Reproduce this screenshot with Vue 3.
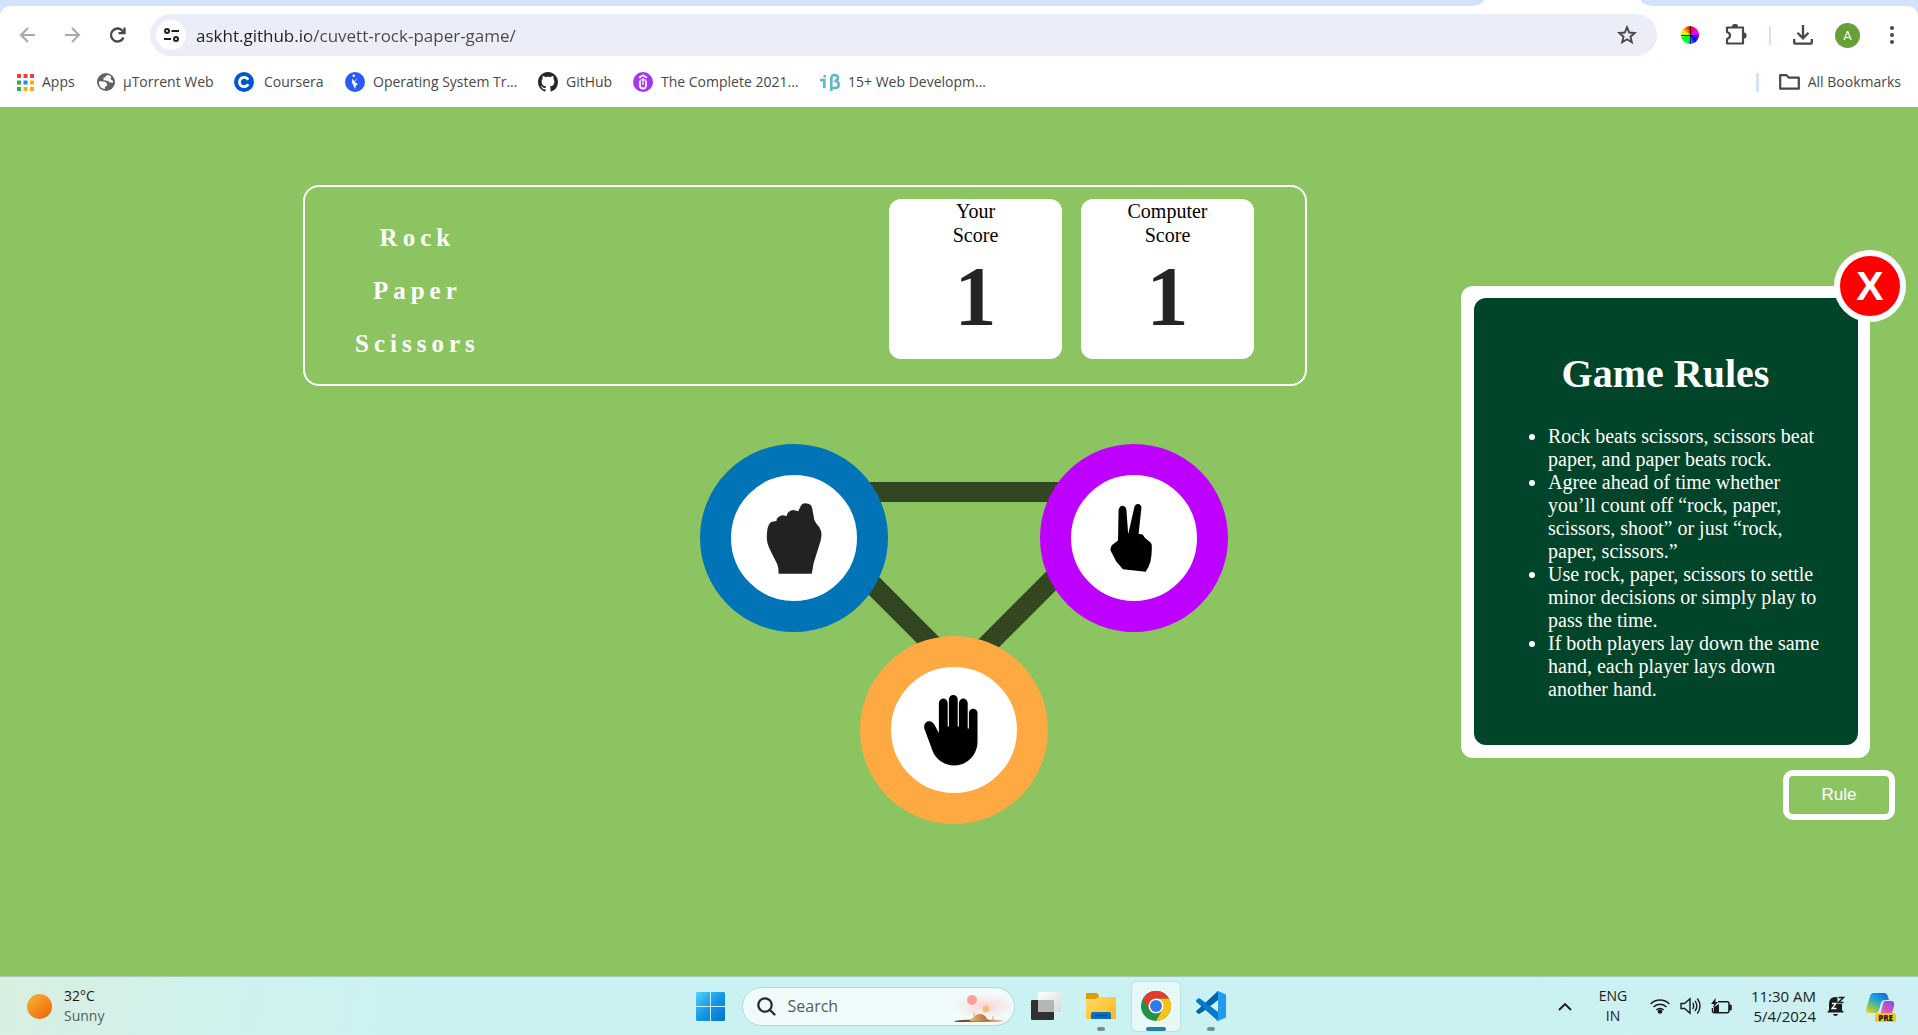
<script setup>
import { ref } from 'vue'

const address = ref('askht.github.io/cuvett-rock-paper-game/')
const query = ref('')
const yourScore = ref(1)
const computerScore = ref(1)
const showRules = ref(true)

const bookmarks = [
  { icon: 'apps', label: 'Apps', width: 80 },
  { icon: 'globe', label: 'µTorrent Web', width: 137 },
  { icon: 'coursera', label: 'Coursera', width: 111 },
  { icon: 'scaler', label: 'Operating System Tr...', width: 193 },
  { icon: 'github', label: 'GitHub', width: 95 },
  { icon: 'udemy', label: 'The Complete 2021...', width: 187 },
  { icon: 'ib', label: '15+ Web Developm...', width: 180 }
]

const rules = [
  'Rock beats scissors, scissors beat paper, and paper beats rock.',
  'Agree ahead of time whether you’ll count off “rock, paper, scissors, shoot” or just “rock, paper, scissors.”',
  'Use rock, paper, scissors to settle minor decisions or simply play to pass the time.',
  'If both players lay down the same hand, each player lays down another hand.'
]
</script>

<template>
  <div class="screen">
    <header class="browser">
      <div class="tabs">
        <span class="strip left"></span>
        <span class="active-tab"></span>
        <span class="strip right"></span>
      </div>
      <div class="chrome">
        <div class="toolbar">
          <nav class="history">
            <button class="icon-btn" aria-label="Back">
              <svg width="18" height="18" viewBox="0 0 18 18" fill="none" stroke="#a9a9a9" stroke-width="2"><path d="M16 9H3M9 2 2 9l7 7" /></svg>
            </button>
            <button class="icon-btn" aria-label="Forward">
              <svg width="18" height="18" viewBox="0 0 18 18" fill="none" stroke="#a9a9a9" stroke-width="2"><path d="M1 9h14M8 2l7 7-7 7" /></svg>
            </button>
            <button class="icon-btn" aria-label="Reload">
              <svg width="18" height="18" viewBox="0 0 18 18" fill="none" stroke="#474747" stroke-width="2.3"><path d="M14.500 11.500A6.500 6.500 0 1 1 13 4.300L15 6" /><path d="M15.500 1.500v5.700H9.500" /></svg>
            </button>
          </nav>
          <div class="omnibox">
            <button class="site-info" aria-label="Site information">
              <svg width="17" height="14" viewBox="0 0 17 14" fill="none" stroke="#1f1f1f" stroke-width="2"><circle cx="4" cy="3" r="2" /><path d="M8.500 3H16M1 11h7" /><circle cx="13" cy="11" r="2" /></svg>
            </button>
            <input v-model="address" class="url" type="text" aria-label="Address" spellcheck="false" />
            <button class="icon-btn" aria-label="Bookmark this page">
              <svg width="20" height="20" viewBox="0 0 20 20" fill="none" stroke="#474747" stroke-width="1.9"><path d="M10 2.300l2.200 5.200 5.600.5-4.300 3.700 1.300 5.500L10 14.300l-4.800 2.900 1.300-5.500L2.200 8l5.600-.5z" /></svg>
            </button>
          </div>
          <div class="actions">
            <button class="icon-btn wheel" aria-label="Color picker"><span class="wheel-disc"></span></button>
            <button class="icon-btn" aria-label="Extensions">
              <svg width="22" height="22" viewBox="0 0 22 22" fill="none" stroke="#474747" stroke-width="2.200" stroke-linejoin="round"><path d="M2 3.500h16v16H2v-4.500c4-1.500 4-5.500 0-7z" /><path d="M8 2.500a2 1.500 0 0 1 4 0zM19 9.500a1.500 2 0 0 1 0 4z" fill="#474747" /></svg>
            </button>
            <span class="divider"></span>
            <button class="icon-btn" aria-label="Downloads">
              <svg width="20" height="20" viewBox="0 0 20 20" fill="none" stroke="#474747" stroke-width="2.300"><path d="M10 0v13M4.500 7.800 10 13.300l5.500-5.500M1.200 14v3.200q0 1.500 1.500 1.500h14.600q1.500 0 1.500-1.500V14" /></svg>
            </button>
            <button class="avatar" aria-label="Profile">A</button>
            <button class="icon-btn" aria-label="Menu">
              <svg width="6" height="18" viewBox="0 0 6 18" fill="#474747"><circle cx="3" cy="2" r="2" /><circle cx="3" cy="9" r="2" /><circle cx="3" cy="16" r="2" /></svg>
            </button>
          </div>
        </div>

        <nav class="bookmarks">
          <a v-for="b in bookmarks" :key="b.label" class="bookmark" :class="b.icon" href="#" :style="{ width: b.width + 'px' }">
            <svg v-if="b.icon === 'apps'" width="17" height="17" viewBox="0 0 17 17">
              <path fill="#ea4335" d="M0 0h4v4H0zM6.500 0h4v4h-4zM13 0h4v4h-4z" />
              <path fill="#34a853" d="M0 6.500h4v4H0zM0 13h4v4H0z" />
              <path fill="#1a8cff" d="M6.500 6.500h4v4h-4z" />
              <path fill="#fbad04" d="M13 6.500h4v4h-4zM6.500 13h4v4h-4zM13 13h4v4h-4z" />
            </svg>
            <svg v-else-if="b.icon === 'globe'" width="18" height="18" viewBox="0 0 18 18">
              <circle cx="9" cy="9" r="9" fill="#5f6368" />
              <path fill="#fff" d="M11.500 2q-3 .2-3 2.200l-2 .5v2l2.500 1h2.200l.8 1.500 3.800.5q.2-1 .2-1.700L13.500 6l.8-2.300zM2 8.300l5.500.2 2.500 2v2.200l-2 1-.2 2.300Q3 15.500 2 10.500z" />
            </svg>
            <svg v-else-if="b.icon === 'coursera'" width="20" height="20" viewBox="0 0 20 20">
              <circle cx="10" cy="10" r="10" fill="#0056d2" />
              <path d="M14.200 12.300a4.700 4.700 0 1 1 0-4.600" fill="none" stroke="#fff" stroke-width="2.800" />
            </svg>
            <svg v-else-if="b.icon === 'scaler'" width="20" height="20" viewBox="0 0 20 20">
              <circle cx="10" cy="10" r="10" fill="#2a5bf5" />
              <circle cx="8.800" cy="3.800" r="1.300" fill="#fff" />
              <path d="M13.300 5.500 9 9.300 7.500 6.500 6.800 10 8 12.500l2 4.500 1-3.500 2-1.500L9.500 10z" fill="#fff" />
            </svg>
            <svg v-else-if="b.icon === 'github'" width="20" height="20" viewBox="0 0 16 16">
              <path fill="#24292f" d="M8 0C3.580 0 0 3.580 0 8c0 3.540 2.290 6.530 5.470 7.590.4.070.55-.17.55-.38 0-.19-.01-.82-.01-1.490-2.010.37-2.530-.49-2.690-.94-.09-.23-.48-.94-.82-1.130-.28-.15-.68-.52-.01-.53.63-.01 1.080.58 1.230.82.72 1.210 1.870.87 2.330.66.07-.52.28-.87.51-1.070-1.780-.2-3.640-.89-3.640-3.950 0-.87.31-1.590.82-2.150-.08-.2-.36-1.020.08-2.120 0 0 .67-.21 2.200.82A7.600 7.600 0 0 1 8 3.860c.68 0 1.360.09 2 .27 1.530-1.040 2.200-.82 2.200-.82.44 1.100.16 1.920.08 2.120.51.56.82 1.270.82 2.150 0 3.070-1.870 3.750-3.650 3.950.29.25.54.73.54 1.480 0 1.070-.01 1.930-.01 2.200 0 .21.15.46.55.38A8 8 0 0 0 16 8c0-4.420-3.580-8-8-8z" />
            </svg>
            <svg v-else-if="b.icon === 'udemy'" width="20" height="20" viewBox="0 0 20 20">
              <circle cx="10" cy="10" r="10" fill="#a435f0" />
              <path d="M6 5.800 10 3.300l4 2.500M7 8.500v5q0 3 3 3t3-3v-5" fill="none" stroke="#fff" stroke-width="1.800" />
              <path d="M10 6v7M7 8h6" stroke="#fff" stroke-width="1.200" />
            </svg>
            <svg v-else width="20" height="18" viewBox="0 0 20 18" fill="none" stroke="#5fb8cc" stroke-width="2.600">
              <path d="M0 7h4.300v8M3.500 3.200h2.500" /><path d="M11.300 18V5.500q0-3.500 3.300-3.500t3.300 3q0 3-3.500 3 4.300 0 4.300 3.500t-3.500 3.500-3.900-1.500" />
            </svg>
            <span>{{ b.label }}</span>
          </a>
          <span class="spacer"></span>
          <span class="divider wide"></span>
          <a class="bookmark all" href="#">
            <svg width="21" height="16" viewBox="0 0 21 16" fill="none" stroke="#474747" stroke-width="2.200" stroke-linejoin="round"><path d="M1.200 1.200h6.300L10 3.700h9.800v11H1.200z" /></svg>
            <span>All Bookmarks</span>
          </a>
        </nav>
      </div>
    </header>

    <main class="page">
      <section class="game">
        <div class="scoreboard">
          <div class="names">
            <span>Rock</span>
            <span>Paper</span>
            <span>Scissors</span>
          </div>
          <div class="cards">
            <div class="card">
              <span>Your</span>
              <span>Score</span>
              <strong>{{ yourScore }}</strong>
            </div>
            <div class="card">
              <span>Computer</span>
              <span>Score</span>
              <strong>{{ computerScore }}</strong>
            </div>
          </div>
        </div>

        <div class="board">
          <svg class="links" viewBox="0 0 528 380" fill="none" stroke="#324621" stroke-width="20">
            <path d="M94 48H434M94 62 254 222M434 54 254 234" />
          </svg>
          <button class="hand rock" aria-label="Rock">
            <svg viewBox="0 0 126 126"><path fill="#242220" d="M35.800 61.700Q36 55 36.900 52.300 38 48.500 40 47L45.400 46Q45.500 43.500 47.200 42.300 49.500 40.300 51.900 40.300L55.800 41Q55.800 38.500 57.600 37 60 35 62.600 35L67.200 36.300 69.400 31.700Q71 28.300 74 28.300 78 28.300 79.700 30 81.500 32 81.500 35L83.300 45Q84.500 48 88.300 52.300 90.800 56 90.400 61 90 66 88.300 70L82.600 88.300 80.800 98.700H47.600Q47.600 92 45.800 88.300L40 76.700Q37.500 72 36.500 68.300 35.800 65 35.800 61.700Z" /></svg>
          </button>
          <button class="hand scissors" aria-label="Scissors">
            <svg viewBox="0 0 126 126"><path fill="#000" d="M47 65.500 47.600 35Q48.500 30.700 51.500 30.700 55 31 55.400 35L57.200 59.300 63.300 32.300Q64.500 29 66.900 29 70.400 29.300 70.400 33L67.600 59Q71 58.800 71.900 59.700L73.600 62.500 79.700 67.700Q81 69 80.800 72 81 80 79.400 86.700 77.500 93 74.700 96.700L51.900 94.300 45.400 86.700 39.700 75.700Q39 72.500 41.100 70Z" /></svg>
          </button>
          <button class="hand paper" aria-label="Paper">
            <svg viewBox="0 0 126 126"><path fill="#000" d="M47.900 66V36a4.400 4.400 0 0 1 8.800 0V59.500h1.200V32.300a4.400 4.400 0 0 1 8.800 0V59.500h1.200V36a4.400 4.400 0 0 1 8.800 0V61.500h1.200V46a4.300 4.300 0 0 1 8.600 0V74.700C86.500 88 76 98.500 63.300 98.500 53 98.500 45 92 41.900 84.700L33.300 61.500C32 53 41 52 43.600 58Z" /></svg>
          </button>
        </div>
      </section>

      <aside class="side">
        <section v-if="showRules" class="rules">
          <div class="rules-body">
            <h1>Game Rules</h1>
            <ul>
              <li v-for="rule in rules" :key="rule">{{ rule }}</li>
            </ul>
          </div>
          <button class="close" aria-label="Close rules" @click="showRules = false">X</button>
        </section>
        <button class="rule-btn" @click="showRules = true">Rule</button>
      </aside>
    </main>

    <footer class="taskbar">
      <div class="weather">
        <span class="sun"></span>
        <div class="lines">
          <span>32°C</span>
          <span class="muted">Sunny</span>
        </div>
      </div>

      <div class="dock">
        <button class="tile" aria-label="Start">
          <svg width="29" height="29" viewBox="0 0 29 29">
            <defs><linearGradient id="win" x1="0" y1="0" x2="29" y2="29" gradientUnits="userSpaceOnUse"><stop offset="0" stop-color="#4fd4ff" /><stop offset="0.500" stop-color="#1697e4" /><stop offset="1" stop-color="#0072cf" /></linearGradient></defs>
            <path fill="url(#win)" d="M1 0h13v14H0V1zM15 0h13l1 1v13H15zM0 15h14v14H1l-1-1zM15 15h14v13l-1 1H15z" />
          </svg>
        </button>
        <div class="search">
          <svg width="19" height="19" viewBox="0 0 19 19" fill="none" stroke="#2a2a2a" stroke-width="2.300" stroke-linecap="round"><circle cx="8" cy="8" r="6.700" /><path d="m13 13 4.500 4.500" /></svg>
          <input v-model="query" type="search" placeholder="Search" aria-label="Search" />
          <svg class="art" width="62" height="32" viewBox="0 0 62 32">
            <defs>
              <radialGradient id="haze"><stop offset="0" stop-color="#ffc2bf" stop-opacity=".75" /><stop offset="1" stop-color="#ffdcd8" stop-opacity="0" /></radialGradient>
              <linearGradient id="ground"><stop offset="0" stop-color="#5b2d17" /><stop offset="0.500" stop-color="#b56b35" /><stop offset="1" stop-color="#f0c09a" /></linearGradient>
              <linearGradient id="dome"><stop offset="0" stop-color="#edb56c" /><stop offset="1" stop-color="#a8622d" /></linearGradient>
            </defs>
            <ellipse cx="34" cy="16" rx="34" ry="13" fill="url(#haze)" />
            <circle cx="21" cy="10" r="5" fill="#ff9d9f" />
            <circle cx="35" cy="19" r="3.500" fill="#ffbe7b" />
            <path d="M3 31q10-2 24-1.500 18 0 26 1-3 1.500-10 1.500H8q-4 0-5-1" fill="url(#ground)" />
            <path d="M19 31q2-4 4-3 1-4 6-4t7 5l4 2q-8 1-21 0" fill="url(#dome)" />
            <path d="M23 22v6M42 26v4" stroke="#d8a184" />
          </svg>
        </div>
        <button class="tile" aria-label="Task view">
          <svg width="30" height="28" viewBox="0 0 30 28">
            <defs><linearGradient id="front" x1="0" y1="0" x2="1" y2="1"><stop offset="0" stop-color="#fff" /><stop offset="1" stop-color="#d5dada" /></linearGradient></defs>
            <rect y="8" width="23" height="20" rx="1" fill="#30302f" />
            <rect x="7" width="23" height="20" rx="1" fill="url(#front)" />
            <path d="M7 8h16v12H7z" fill="#b5b6b6" />
          </svg>
        </button>
        <button class="tile running" aria-label="File Explorer">
          <svg width="30" height="27" viewBox="0 0 30 27">
            <defs><linearGradient id="folder" x1="0" y1="0" x2="1" y2="1"><stop offset="0" stop-color="#ffd968" /><stop offset="1" stop-color="#fcb91c" /></linearGradient></defs>
            <path d="M0 1q0-1 1-1h9q1 0 2 1l1 2v4H0z" fill="#dc9c05" />
            <path d="M0 6h9q2 0 3-2h17q1 0 1 1v20q0 1-1 1H1q-1 0-1-1z" fill="url(#folder)" />
            <path d="M5 26v-5q0-2 2-2h16q2 0 2 2v5z" fill="#0b6fc7" /><path d="M9 22.500h12" stroke="#08468a" stroke-width="1.500" />
          </svg>
        </button>
        <button class="tile running active" aria-label="Google Chrome">
          <svg width="30" height="30" viewBox="0 0 48 48">
            <circle cx="24" cy="24" r="24" fill="#229342" />
            <path fill="#fbc116" d="M44.800 12A24 24 0 0 1 24 48L34.400 30 24 12z" />
            <path fill="#e33b2e" d="M13.600 30 3.200 12A24 24 0 0 1 44.800 12H24z" />
            <circle cx="24" cy="24" r="12" fill="#fff" /><circle cx="24" cy="24" r="9.500" fill="#3079ec" />
          </svg>
        </button>
        <button class="tile running" aria-label="Visual Studio Code">
          <svg width="30" height="30" viewBox="0 0 30 30">
            <path d="M22 0 3 17.500 0 20l1 2 2 1 5-3L22 9z" fill="#0065a9" />
            <path d="M1 8.500 3 7l3 2 16 12v9L1 11.500Q-1 10 1 8.500z" fill="#007acc" />
            <path d="M22 0l8 3.500v23L22 30q-1.500 0-2-1.500 2 1 2-1.500V3q0-2.500-2-1.500.5-1.500 2-1.500" fill="#1f9cf0" />
          </svg>
        </button>
      </div>

      <div class="tray">
        <button class="icon-btn" aria-label="Show hidden icons">
          <svg width="14" height="9" viewBox="0 0 14 9" fill="none" stroke="#1b1b1b" stroke-width="1.900"><path d="m1 8 6-6 6 6" /></svg>
        </button>
        <div class="lines lang"><span>ENG</span><span>IN</span></div>
        <div class="status">
          <svg width="20" height="16" viewBox="0 0 20 16" fill="none" stroke="#1b1b1b" stroke-width="1.500"><path d="M.7 6a13 13 0 0 1 18.600 0M3.500 9a9 9 0 0 1 13 0M6.300 12a5.200 5.200 0 0 1 7.400 0" /><circle cx="10" cy="13.500" r="1.600" fill="#1b1b1b" /></svg>
          <svg width="21" height="18" viewBox="0 0 21 18" fill="none" stroke="#1b1b1b" stroke-width="1.400"><path d="M1 6.500h3.500L10 1.700v14.600l-5.500-4.800H1zM12.700 6q2 3 0 6M15 3.800q3.700 5.200 0 10.400M17.300 1.500q5.500 7.500 0 15" /></svg>
          <svg width="21" height="17" viewBox="0 0 21 17" fill="none" stroke="#1b1b1b" stroke-width="1.500"><path d="M7 3.800h9q2 0 2 2v7q0 2-2 2H3.500q-2 0-2-2V10" /><path d="M3 14V9l5-3v8z" fill="#1b1b1b" stroke="none" /><path d="M4.500 0 0 6h3L2 10l5-6H4.500z" fill="#1b1b1b" stroke="none" /><path d="M18.500 7.500h1.500v4h-1.500z" fill="#1b1b1b" /></svg>
        </div>
        <div class="lines clock"><span>11:30 AM</span><span>5/4/2024</span></div>
        <svg class="bell" width="18" height="20" viewBox="0 0 18 20">
          <path d="M2 14V8q0-7 6.500-7 6.500 0 6.500 7v6l2 2.500H0z" fill="#1b1b1b" />
          <path d="M6 18h5q-.5 2-2.500 2T6 18" fill="#1b1b1b" />
          <path d="M10.500 0H18v8h-7.500z" fill="#cbf1f2" />
          <path d="M5 7.500h4l-4 5h4.500" fill="none" stroke="#fff" stroke-width="1.300" />
          <path d="M11.500 1.500h5l-5 5h5" fill="none" stroke="#1b1b1b" stroke-width="1.500" />
        </svg>
        <div class="copilot">
          <svg width="29" height="26" viewBox="0 0 29 26">
            <defs>
              <linearGradient id="cpa" x1=".8" y1="0" x2=".1" y2="1"><stop offset="0" stop-color="#1668dc" /><stop offset=".4" stop-color="#20a6de" /><stop offset=".7" stop-color="#7cc162" /><stop offset="1" stop-color="#f4cf27" /></linearGradient>
              <linearGradient id="cpb" x1=".8" y1="0" x2=".1" y2="1"><stop offset="0" stop-color="#8a4be8" /><stop offset=".5" stop-color="#d956b4" /><stop offset="1" stop-color="#fc8d62" /></linearGradient>
            </defs>
            <path d="M8 0h10q3 0 4 4l1 3h-4q-3 0-4 3l-2 7q-1 3-3 3H3q-4 0-2.500-5L4 3q1-3 4-3" fill="url(#cpa)" />
            <path d="M19 8h6q4 0 3 5l-2 7q-1 4-5 4H10q4-1 5-5l2-8q.5-3 2-3" fill="url(#cpb)" />
          </svg>
          <span class="pre">PRE</span>
        </div>
      </div>
    </footer>
  </div>
</template>

<style>
body {
  margin: 0;
}
</style>

<style scoped>
.screen {
  display: flex;
  flex-direction: column;
  min-height: 100vh;
  font-family: "Open Sans", "Noto Sans", sans-serif;
  color: #1b1b1b;
}
button {
  padding: 0;
  border: 0;
  background: none;
  cursor: pointer;
}
svg {
  display: block;
  flex: none;
}
.icon-btn {
  display: flex;
  align-items: center;
  justify-content: center;
}

/* browser */
.browser {
  background: #d3e3fd;
}
.tabs {
  display: flex;
  height: 6px;
  background: #fff;
}
.strip {
  background: #d3e3fd;
}
.strip.left {
  flex: 1;
  border-radius: 0 0 14px 0 / 0 0 6px 0;
}
.active-tab {
  width: 157px;
}
.strip.right {
  width: 277px;
  border-radius: 0 0 0 14px / 0 0 0 6px;
}
.chrome {
  height: 101px;
  background: #fff;
  border-radius: 10px 10px 0 0;
}
.toolbar {
  display: flex;
  align-items: center;
  padding: 8px 23px 0 19px;
}
.history {
  display: flex;
  gap: 27px;
  width: 131px;
}
.omnibox {
  display: flex;
  flex: 1;
  align-items: center;
  height: 42px;
  padding: 0 20px 0 6px;
  box-sizing: border-box;
  background: #ebeef8;
  border-radius: 21px;
}
.site-info {
  display: flex;
  align-items: center;
  justify-content: center;
  width: 30px;
  height: 30px;
  background: #fff;
  border-radius: 50%;
}
.url {
  flex: 1;
  min-width: 0;
  margin-left: 10px;
  padding: 2px 0 0;
  border: 0;
  outline: 0;
  font: 17px/24px "Open Sans", "Noto Sans", sans-serif;
  color: transparent;
  background: linear-gradient(90deg, #1f1f1f 113px, #474747 113px) text;
}
.actions {
  display: flex;
  align-items: center;
  gap: 22px;
  margin-left: 24px;
}
.wheel {
  margin-right: 4px;
}
.wheel-disc {
  width: 18px;
  height: 18px;
  border-radius: 50%;
  background:
    linear-gradient(#222, #222) center / 1px 100% no-repeat,
    linear-gradient(#222, #222) center / 100% 1px no-repeat,
    conic-gradient(#f00, #f0a 12%, #f0f 20%, #60f 28%, #00f 38%, #09f 48%, #0f6 56%, #0f0 68%, #cf0 76%, #fd0 84%, #f60 92%, #f00);
}
.divider {
  width: 2px;
  height: 19px;
  background: #d3e3fd;
}
.divider.wide {
  width: 3px;
}
.avatar {
  width: 25px;
  height: 25px;
  margin-right: 7px;
  border-radius: 50%;
  background: #689f38;
  color: #fff;
  font: 13px/25px Roboto, sans-serif;
}
.bookmarks {
  display: flex;
  align-items: center;
  height: 52px;
  padding: 0 17px;
}
.bookmark {
  display: flex;
  flex: none;
  align-items: center;
  gap: 8px;
  color: #474747;
  font-size: 14px;
  line-height: 20px;
  white-space: nowrap;
  text-decoration: none;
}
.bookmark.coursera {
  gap: 10px;
}
.spacer {
  flex: 1;
}
.bookmark.all {
  margin-left: 20px;
}

/* game page */
.page {
  display: flex;
  flex: 1;
  background: #8cc461;
  font-family: "Liberation Serif", serif;
}
.game {
  display: flex;
  flex: 1;
  flex-direction: column;
  padding: 78px 154px 0 303px;
}
.scoreboard {
  display: flex;
  justify-content: space-between;
  padding: 12px 51px 14px 50px;
  border: 2px solid #fff;
  border-radius: 16px;
}
.names {
  display: flex;
  flex-direction: column;
  padding-top: 12px;
  color: #fff;
  font-size: 25px;
  font-weight: 700;
  line-height: 53px;
  letter-spacing: 5px;
  text-align: center;
}
.names span {
  height: 53px;
}
.cards {
  display: flex;
  gap: 19px;
}
.card {
  display: flex;
  flex-direction: column;
  width: 173px;
  height: 160px;
  border-radius: 12px;
  background: #fff;
  color: #000;
  font-size: 20px;
  line-height: 24px;
  text-align: center;
}
.card strong {
  color: #252525;
  font-size: 84px;
  line-height: 100px;
}
.board {
  position: relative;
  align-self: flex-end;
  width: 528px;
  height: 380px;
  margin: 58px 79px 0 0;
}
.links {
  position: absolute;
  inset: 0;
}
.hand {
  position: absolute;
  width: 188px;
  height: 188px;
  border: 31px solid;
  border-radius: 50%;
  background: #fff;
}
.rock {
  top: 0;
  left: 0;
  border-color: #0074b6;
}
.scissors {
  top: 0;
  left: 340px;
  border-color: #bd00ff;
}
.paper {
  top: 192px;
  left: 160px;
  border-color: #ffa943;
}

/* rules */
.side {
  display: flex;
  flex-direction: column;
  align-items: flex-start;
  width: 457px;
  padding-top: 179px;
}
.rules {
  position: relative;
  width: 409px;
  box-sizing: border-box;
  padding: 12px 12px 13px 13px;
  border-radius: 12px;
  background: #fff;
}
.rules-body {
  padding: 53px 30px 44px 24px;
  border-radius: 12px;
  background: #004429;
  color: #fff;
}
.rules h1 {
  margin: 0 0 28px 5px;
  font-size: 40px;
  line-height: 46px;
  text-align: center;
}
.rules ul {
  margin: 0;
  padding-left: 50px;
  font-size: 20px;
  line-height: 23px;
}
.close {
  position: absolute;
  top: -36px;
  right: -36px;
  width: 72px;
  height: 72px;
  border: 6px solid #fff;
  border-radius: 50%;
  background: #f00;
  color: #fff;
  font: 700 41px/60px "Liberation Sans", sans-serif;
}
.rule-btn {
  align-self: flex-end;
  width: 112px;
  height: 50px;
  margin: 12px 23px 0 0;
  border: 6px solid #fff;
  border-radius: 10px;
  color: #fff;
  font: 17px/20px "Liberation Sans", sans-serif;
}

/* taskbar */
.taskbar {
  display: grid;
  grid-template-columns: 1fr auto 1fr;
  align-items: center;
  height: 59px;
  box-sizing: border-box;
  border-top: 1px solid #a5c6b8;
  background: linear-gradient(100deg, #d9eee0, #d1f1ec 10%, #caf2f2 22%, #caf2f2 75%, #cdf0f3);
}
.weather {
  display: flex;
  align-items: center;
  gap: 12px;
  padding-left: 27px;
}
.sun {
  width: 25px;
  height: 25px;
  border-radius: 50%;
  background: linear-gradient(140deg, #ecbc38, #f58a1b 50%, #ee5f0b);
}
.lines {
  display: flex;
  flex-direction: column;
  font-size: 14px;
  line-height: 20px;
}
.muted {
  color: #51615f;
}
.dock {
  display: flex;
  align-items: center;
  gap: 7px;
  padding-left: 3px;
}
.tile {
  position: relative;
  display: flex;
  align-items: center;
  justify-content: center;
  width: 48px;
  height: 49px;
  border-radius: 5px;
}
.tile.active {
  background: #e6f8f8;
  box-shadow: 0 0 1px 1px #bfe0e0;
}
.tile.running::after {
  content: "";
  position: absolute;
  bottom: 0;
  width: 8px;
  height: 4px;
  border-radius: 2px;
  background: #75908f;
}
.tile.active::after {
  width: 20px;
  background: #268392;
}
.search {
  display: flex;
  align-items: center;
  width: 273px;
  height: 39px;
  box-sizing: border-box;
  padding: 0 1px 0 14px;
  border: 1px solid #b3d8d6;
  border-radius: 20px;
  background: #f0fbfb;
}
.search input {
  flex: 1;
  min-width: 0;
  padding: 0 0 0 12px;
  border: 0;
  outline: 0;
  background: none;
  font: 16px/24px "Open Sans", "Noto Sans", sans-serif;
}
.search input::placeholder {
  color: #505b5b;
}
.tray {
  display: flex;
  align-items: center;
  justify-content: flex-end;
  padding-right: 23px;
}
.lang {
  width: 40px;
  margin: 0 17px 0 21px;
  text-align: center;
}
.status {
  display: flex;
  align-items: center;
  gap: 10px;
}
.clock {
  width: 84px;
  font-size: 15px;
  text-align: right;
}
.bell {
  margin: 0 21px 0 11px;
}
.copilot {
  position: relative;
}
.pre {
  position: absolute;
  right: -1px;
  bottom: -3px;
  padding: 0 3px;
  border-radius: 2px;
  background: #ffc60a;
  font-size: 8px;
  font-weight: 800;
  line-height: 9px;
}
</style>
